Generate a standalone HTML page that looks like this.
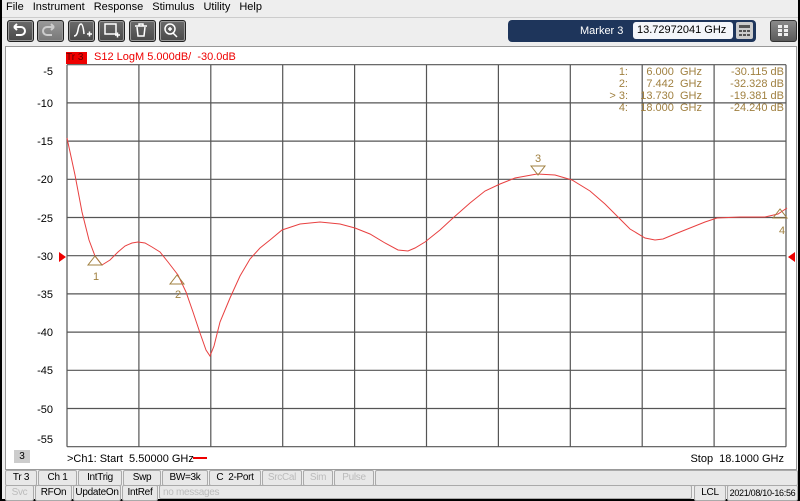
<!DOCTYPE html>
<html><head><meta charset="utf-8"><style>
body{margin:0;width:800px;height:501px;overflow:hidden;background:#000;font-family:"Liberation Sans",sans-serif;}
#w{position:absolute;left:2px;top:0;width:796px;height:499px;background:#eeeeee;}
.menu{position:absolute;top:1px;left:4px;font-size:11px;color:#000;}
.menu span{margin-right:9px}
.tb{position:absolute;top:20px;width:25px;height:20px;background:linear-gradient(#6a6a6a,#4a4a4a);border:1px solid #222;border-radius:3px;box-shadow:inset 0 0 0 1px #999;}
.st{position:absolute;height:14px;border:1px solid #aaa;border-radius:2px;background:#e8e8e8;font-size:10px;color:#000;text-align:center;line-height:14px;letter-spacing:-0.3px}
.dis{color:#bbb}
</style></head><body><div id="w">
<div class="menu"><span>File</span><span>Instrument</span><span>Response</span><span>Stimulus</span><span>Utility</span><span>Help</span></div>
<div style="position:absolute;left:0;top:17px;width:796px;height:1px;background:#ccc"></div>
<div class="tb" style="left:5px"></div><div class="tb" style="left:35px;background:linear-gradient(#999,#777)"></div><div class="tb" style="left:66px"></div><div class="tb" style="left:96px"></div><div class="tb" style="left:127px"></div><div class="tb" style="left:157px"></div>
<svg style="position:absolute;left:0;top:0" width="200" height="45" fill="none" stroke="#fff" stroke-width="2">
<path d="M12 27 h7 a4 4 0 0 1 0 8 h-5 M12 27 l3 -3 M12 27 l3 3"/>
<path d="M52 27 h-7 a4 4 0 0 0 0 8 h5 M52 27 l-3 -3 M52 27 l-3 3" stroke="#ccc"/>
<path d="M72 36 q3 0 4 -6 q1 -6 3 -6 q2 0 3 10 M85 34 h5 M87.5 31.5 v5" stroke-width="1.5"/>
<rect x="103" y="24" width="11" height="10" stroke-width="1.5"/><path d="M113 35 h5 M115.5 32.5 v5" stroke-width="1.5"/>
<path d="M133 26 h12 M137 26 v-2 h4 v2 M135 27 l1 9 h6 l1 -9" stroke-width="1.5"/>
<circle cx="168" cy="29" r="5" stroke-width="1.5"/><path d="M171 33 l4 4 M166 29 h4 M168 27 v4" stroke-width="1.5"/>
</svg>
<div style="position:absolute;left:506px;top:20px;width:248px;height:22px;background:#1e355b;border-radius:4px"></div>
<div style="position:absolute;left:578px;top:25px;color:#fff;font-size:11px">Marker 3</div>
<div style="position:absolute;left:631px;top:22px;width:96px;height:17px;background:#f4f6fa;border-radius:3px;font-size:11px;line-height:17px;padding-left:4px">13.72972041 GHz</div>
<div style="position:absolute;left:734px;top:22px;width:17px;height:17px;background:#ccc;border-radius:2px"></div>
<svg style="position:absolute;left:734px;top:22px" width="17" height="17" fill="#555"><rect x="3" y="3" width="11" height="3"/><rect x="3" y="8" width="3" height="2"/><rect x="7" y="8" width="3" height="2"/><rect x="11" y="8" width="3" height="2"/><rect x="3" y="12" width="3" height="2"/><rect x="7" y="12" width="3" height="2"/><rect x="11" y="12" width="3" height="2"/></svg>
<div style="position:absolute;left:768px;top:20px;width:25px;height:20px;background:linear-gradient(#8a8a8a,#5a5a5a);border:1px solid #333;border-radius:3px"></div>
<svg style="position:absolute;left:775px;top:24px" width="12" height="13" fill="#eee"><rect x="1" y="1" width="4" height="3"/><rect x="7" y="1" width="4" height="3"/><rect x="1" y="5" width="4" height="3"/><rect x="7" y="5" width="4" height="3"/><rect x="1" y="9" width="4" height="3"/><rect x="7" y="9" width="4" height="3"/></svg>
<div style="position:absolute;left:3px;top:46px;width:790px;height:422px;background:#fff;border:1px solid #999"></div>
<div style="position:absolute;left:64px;top:52px;width:21px;height:12px;background:#e00;color:#600;font-size:10px;line-height:12px">Tr 3</div>
<div style="position:absolute;left:92px;top:51px;color:#e00;font-size:11px">S12 LogM 5.000dB/ &nbsp;-30.0dB</div>
<svg style="position:absolute;left:-2px;top:0" width="800" height="501">
<g stroke="#555" stroke-width="1.2">
<path d="M67 64.7V446.7M138.9 64.7V446.7M210.8 64.7V446.7M282.7 64.7V446.7M354.6 64.7V446.7M426.5 64.7V446.7M498.4 64.7V446.7M570.3 64.7V446.7M642.2 64.7V446.7M714.1 64.7V446.7M786 64.7V446.7"/>
<path d="M67 64.7H786M67 102.9H786M67 141.1H786M67 179.3H786M67 217.5H786M67 255.7H786M67 293.9H786M67 332.1H786M67 370.3H786M67 408.5H786M67 446.7H786"/>
</g>
<g font-size="11" text-anchor="end" fill="#000">
<text x="53" y="75">-5</text><text x="53" y="107">-10</text><text x="53" y="145">-15</text><text x="53" y="183">-20</text><text x="53" y="222">-25</text><text x="53" y="260">-30</text><text x="53" y="298">-35</text><text x="53" y="336">-40</text><text x="53" y="374">-45</text><text x="53" y="413">-50</text><text x="53" y="443">-55</text>
</g>
<path d="M59 252 l7 5 l-7 5z M795 252 l-7 5 l7 5z" fill="#e00"/>
<polyline fill="none" stroke="#e84040" stroke-width="1" points="67,138 75,175 82,212 89,240 95,256 102,265 110,260 118,252 125,246 132,243 138,242 145,243 152,247 160,252 168,262 178,275 186,292 193,312 200,333 206,350 210,356 214,346 220,322 230,298 240,276 250,259 260,248 270,240 282,230 300,224 320,222 340,224 355,228 370,234 385,243 398,250 408,251 415,248 425,242 440,230 453,218 470,203 485,191 500,184 515,178 537,174 555,175 572,180 590,191 605,204 620,219 630,229 645,238 655,240 663,239 675,234 690,228 705,222 717,218 740,217 765,217 778,214 787,208"/>
<g fill="none" stroke="#a08040" stroke-width="1"><path d="M95 256 l-7 9 h14z M177 275 l-7 9 h14z M538 175 l-7 -9 h14z M780 209 l-7 9 h14z"/></g>
<g font-size="11" fill="#a08040" text-anchor="middle"><text x="96" y="280">1</text><text x="178" y="298">2</text><text x="538" y="162">3</text><text x="782" y="234">4</text></g>
<g font-size="11" fill="#a08040" text-anchor="end">
<text x="628" y="75">1:</text><text x="628" y="87">2:</text><text x="628" y="99">&gt; 3:</text><text x="628" y="111">4:</text>
<text x="702" y="75">6.000 &nbsp;GHz</text><text x="702" y="87">7.442 &nbsp;GHz</text><text x="702" y="99">13.730 &nbsp;GHz</text><text x="702" y="111">18.000 &nbsp;GHz</text>
<text x="784" y="75">-30.115 dB</text><text x="784" y="87">-32.328 dB</text><text x="784" y="99">-19.381 dB</text><text x="784" y="111">-24.240 dB</text>
</g>
<text x="67" y="462" font-size="11">&gt;Ch1: Start &nbsp;5.50000 GHz</text>
<path d="M193 458 h14" stroke="#e00" stroke-width="2"/>
<text x="784" y="462" font-size="11" text-anchor="end">Stop &nbsp;18.1000 GHz</text>
</svg>
<div style="position:absolute;left:12px;top:450px;width:16px;height:13px;background:#ccc;font-size:10px;text-align:center;line-height:13px">3</div>
<div class="st" style="left:3px;top:470px;width:30px">Tr 3</div>
<div class="st" style="left:36px;top:470px;width:37px">Ch 1</div>
<div class="st" style="left:76px;top:470px;width:42px">IntTrig</div>
<div class="st" style="left:121px;top:470px;width:36px">Swp</div>
<div class="st" style="left:160px;top:470px;width:44px">BW=3k</div>
<div class="st" style="left:207px;top:470px;width:50px">C &nbsp;2-Port</div>
<div class="st dis" style="left:260px;top:470px;width:38px">SrcCal</div>
<div class="st dis" style="left:301px;top:470px;width:28px">Sim</div>
<div class="st dis" style="left:332px;top:470px;width:38px">Pulse</div>
<div class="st" style="left:373px;top:470px;width:421px"></div>
<div class="st dis" style="left:3px;top:485px;width:27px">Svc</div>
<div class="st" style="left:33px;top:485px;width:35px">RFOn</div>
<div class="st" style="left:71px;top:485px;width:46px">UpdateOn</div>
<div class="st" style="left:120px;top:485px;width:34px">IntRef</div>
<div class="st dis" style="left:157px;top:485px;text-align:left;padding-left:3px;box-sizing:border-box;width:533px">no messages</div>
<div class="st" style="left:692px;top:485px;width:30px">LCL</div>
<div class="st" style="left:725px;top:485px;width:69px;font-size:9px">2021/08/10-16:56</div>
</div></body></html>
